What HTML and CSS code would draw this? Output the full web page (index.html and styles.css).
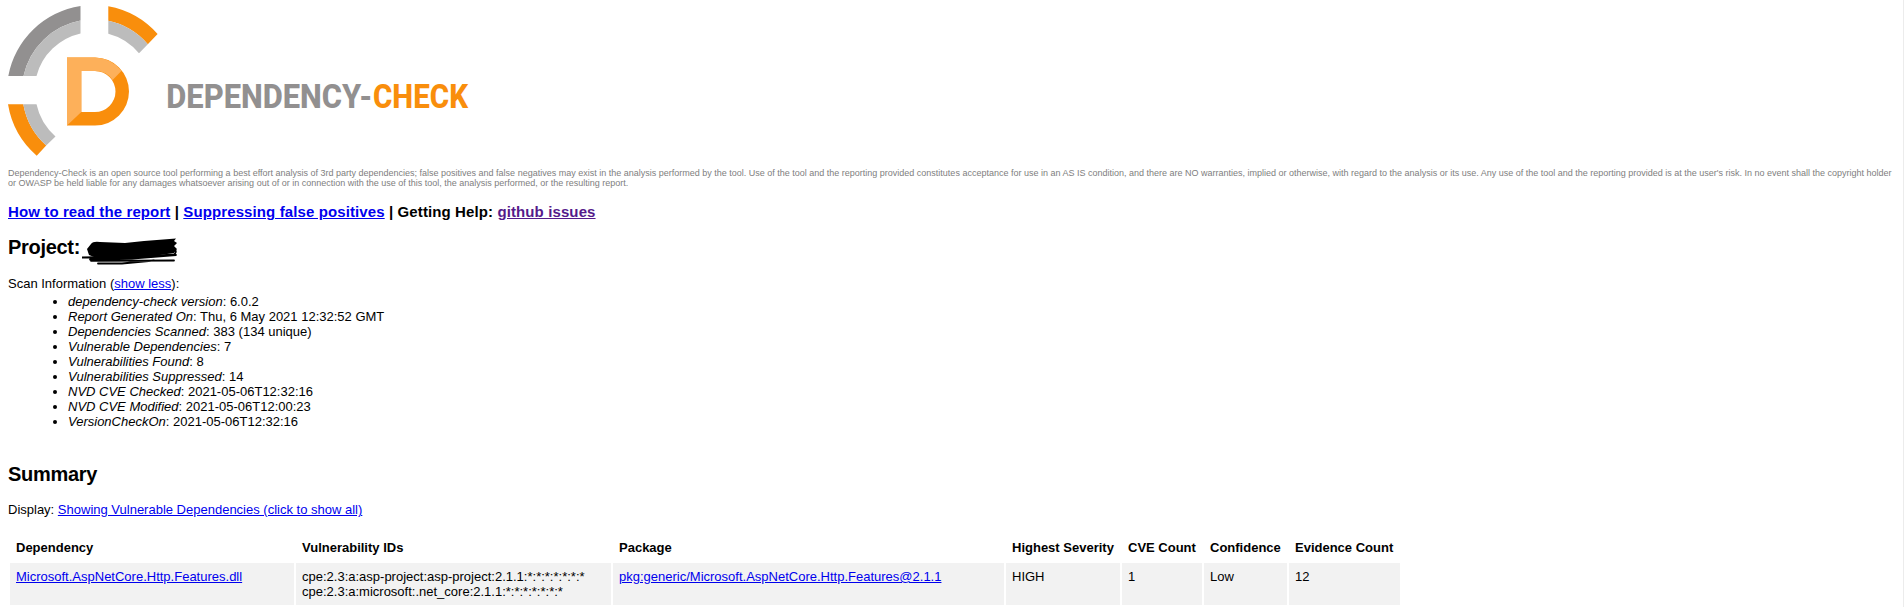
FILE: index.html
```
<!DOCTYPE html>
<html lang="en">
<head>
<meta charset="utf-8">
<title>Dependency-Check Report</title>
<link rel="stylesheet" href="styles.css">
</head>
<body>
<header>
<svg class="logo" width="520" height="160" viewBox="0 0 520 160" role="img" aria-label="Dependency-Check">
  <path fill="#929090" d="M80.500 6A87 87 0 0 0 8.300 76H23.500A72 72 0 0 1 80.500 20.500Z"/>
  <path fill="#bcbcbc" d="M80.500 20.500A72 72 0 0 0 23.500 76H36.500A59 59 0 0 1 80.500 33.500Z"/>
  <path fill="#f98e0c" d="M108.300 6.300A87 87 0 0 1 157.600 34L147.800 44.200A72 72 0 0 0 108.300 20.800Z"/>
  <path fill="#bcbcbc" d="M108.300 20.800A72 72 0 0 1 147.800 44.200L139 53.300A59 59 0 0 0 108.300 33.700Z"/>
  <path fill="#f98e0c" d="M8 104.300A87 87 0 0 0 36.700 155.700L46.200 145.500A72 72 0 0 1 23.300 104.300Z"/>
  <path fill="#bcbcbc" d="M23.300 104.300A72 72 0 0 0 46.200 145.500L55.500 136.400A59 59 0 0 1 36.500 104.300Z"/>
  <path fill="#f98e0c" fill-rule="evenodd" d="M67 57.500H95A34 34 0 0 1 95 125.500H67ZM81.300 71V112H95A20.500 20.500 0 0 0 95 71Z"/>
  <path fill="#fdb05a" d="M67 57.500H95Q111 58 121.600 70.700L112.600 80Q107 71 95 71H81.300V112L67 125.500Z"/>
  <text class="word word-grey" x="166.300" y="107.500" textLength="206" lengthAdjust="spacingAndGlyphs">DEPENDENCY-</text>
  <text class="word word-orange" x="373" y="107.500" textLength="95" lengthAdjust="spacingAndGlyphs">CHECK</text>
</svg>
<p class="disclaimer">Dependency-Check is an open source tool performing a best effort analysis of 3rd party dependencies; false positives and false negatives may exist in the analysis performed by the tool. Use of the tool and the reporting provided constitutes acceptance for use in an AS IS condition, and there are NO warranties, implied or otherwise, with regard to the analysis or its use. Any use of the tool and the reporting provided is at the user's risk. In no event shall the copyright holder<br>or OWASP be held liable for any damages whatsoever arising out of or in connection with the use of this tool, the analysis performed, or the resulting report.</p>
</header>
<h3 class="help"><a href="#">How to read the report</a> | <a href="#">Suppressing false positives</a> | Getting Help: <a class="visited" href="#">github issues</a></h3>
<h2 class="project">Project: <svg class="redaction" width="98" height="30" viewBox="0 0 98 30" aria-hidden="true">
  <path d="M9 6Q11 3 18 4L43 5L62 3L94 .5L92 3L95 5L92 8L95 11L92 15L78 17L60 19H12L7 17L5 11Z"/>
  <path class="scribble" d="M0 19.500L62 18.500L92 16.500Q95 14 93 12M8 21.500L50 20.500L94 17M9 22.800L92 22.500M16 25.500L40 25.500L72 22.500"/>
</svg></h2>
<div class="scan">Scan Information (<a href="#">show less</a>):
<ul>
<li><i>dependency-check version</i>: 6.0.2</li>
<li><i>Report Generated On</i>: Thu, 6 May 2021 12:32:52 GMT</li>
<li><i>Dependencies Scanned</i>: 383 (134 unique)</li>
<li><i>Vulnerable Dependencies</i>: 7</li>
<li><i>Vulnerabilities Found</i>: 8</li>
<li><i>Vulnerabilities Suppressed</i>: 14</li>
<li><i>NVD CVE Checked</i>: 2021-05-06T12:32:16</li>
<li><i>NVD CVE Modified</i>: 2021-05-06T12:00:23</li>
<li><i>VersionCheckOn</i>: 2021-05-06T12:32:16</li>
</ul>
</div>
<h2 class="summary-title">Summary</h2>
<p class="display">Display: <a href="#">Showing Vulnerable Dependencies (click to show all)</a></p>
<table class="summary">
<colgroup><col class="c-dep"><col class="c-ids"><col class="c-pkg"><col class="c-sev"><col class="c-cve"><col class="c-conf"><col class="c-evi"></colgroup>
<thead><tr><th>Dependency</th><th>Vulnerability IDs</th><th>Package</th><th>Highest Severity</th><th>CVE Count</th><th>Confidence</th><th>Evidence Count</th></tr></thead>
<tbody><tr>
<td><a href="#">Microsoft.AspNetCore.Http.Features.dll</a></td>
<td>cpe:2.3:a:asp-project:asp-project:2.1.1:*:*:*:*:*:*:*<br>cpe:2.3:a:microsoft:.net_core:2.1.1:*:*:*:*:*:*:*</td>
<td><a href="#">pkg:generic/Microsoft.AspNetCore.Http.Features@2.1.1</a></td>
<td>HIGH</td><td>1</td><td>Low</td><td>12</td>
</tr></tbody>
</table>
</body>
</html>
```
FILE: styles.css
```
html {
  height: 607px;
  overflow: hidden;
  background: #fff;
}
body {
  box-sizing: border-box;
  height: 607px;
  margin: 0;
  padding-left: 8px;
  border-right: 1px solid #ececec;
  overflow: hidden;
  font: 13px/15px "Liberation Sans", Arial, sans-serif;
  color: #000;
}
a { color: #0000ee; }
a.visited { color: #551a8b; }
.logo {
  display: block;
  margin-left: -8px;
}
.word {
  font: 800 32.5px Roboto, sans-serif;
}
.word-grey { fill: #929090; }
.word-orange { fill: #f98e0c; }
.disclaimer {
  margin: 8px 0 0;
  font-size: 9px;
  line-height: 10px;
  white-space: nowrap;
  color: #808080;
}
.help {
  margin: 15px 0 0;
  font-size: 15px;
  line-height: 18px;
  letter-spacing: 0.11px;
}
.project, .summary-title {
  font-size: 20px;
  line-height: 24px;
  letter-spacing: -0.3px;
}
.project {
  display: flex;
  gap: 2px;
  height: 24px;
  margin: 14px 0 0;
}
.redaction { margin-top: 3px; }
.scribble {
  fill: none;
  stroke: #000;
  stroke-width: 1.8;
  stroke-linecap: round;
}
.scan { margin-top: 17px; }
.scan ul {
  margin: 3px 0 0;
  padding-left: 60px;
}
.summary-title { margin: 33px 0 0; }
.display { margin: 16px 0 0; }
.summary {
  width: 1394px;
  margin-top: 15px;
  table-layout: fixed;
  border-spacing: 2px;
}
.summary th, .summary td {
  padding: 6px;
  text-align: left;
  vertical-align: top;
}
.summary th { white-space: nowrap; }
.summary td { background: #f2f2f2; }
.c-dep { width: 284px; }
.c-ids { width: 315px; }
.c-pkg { width: 391px; }
.c-sev { width: 114px; }
.c-cve { width: 80px; }
.c-conf { width: 83px; }
.c-evi { width: 111px; }
```
